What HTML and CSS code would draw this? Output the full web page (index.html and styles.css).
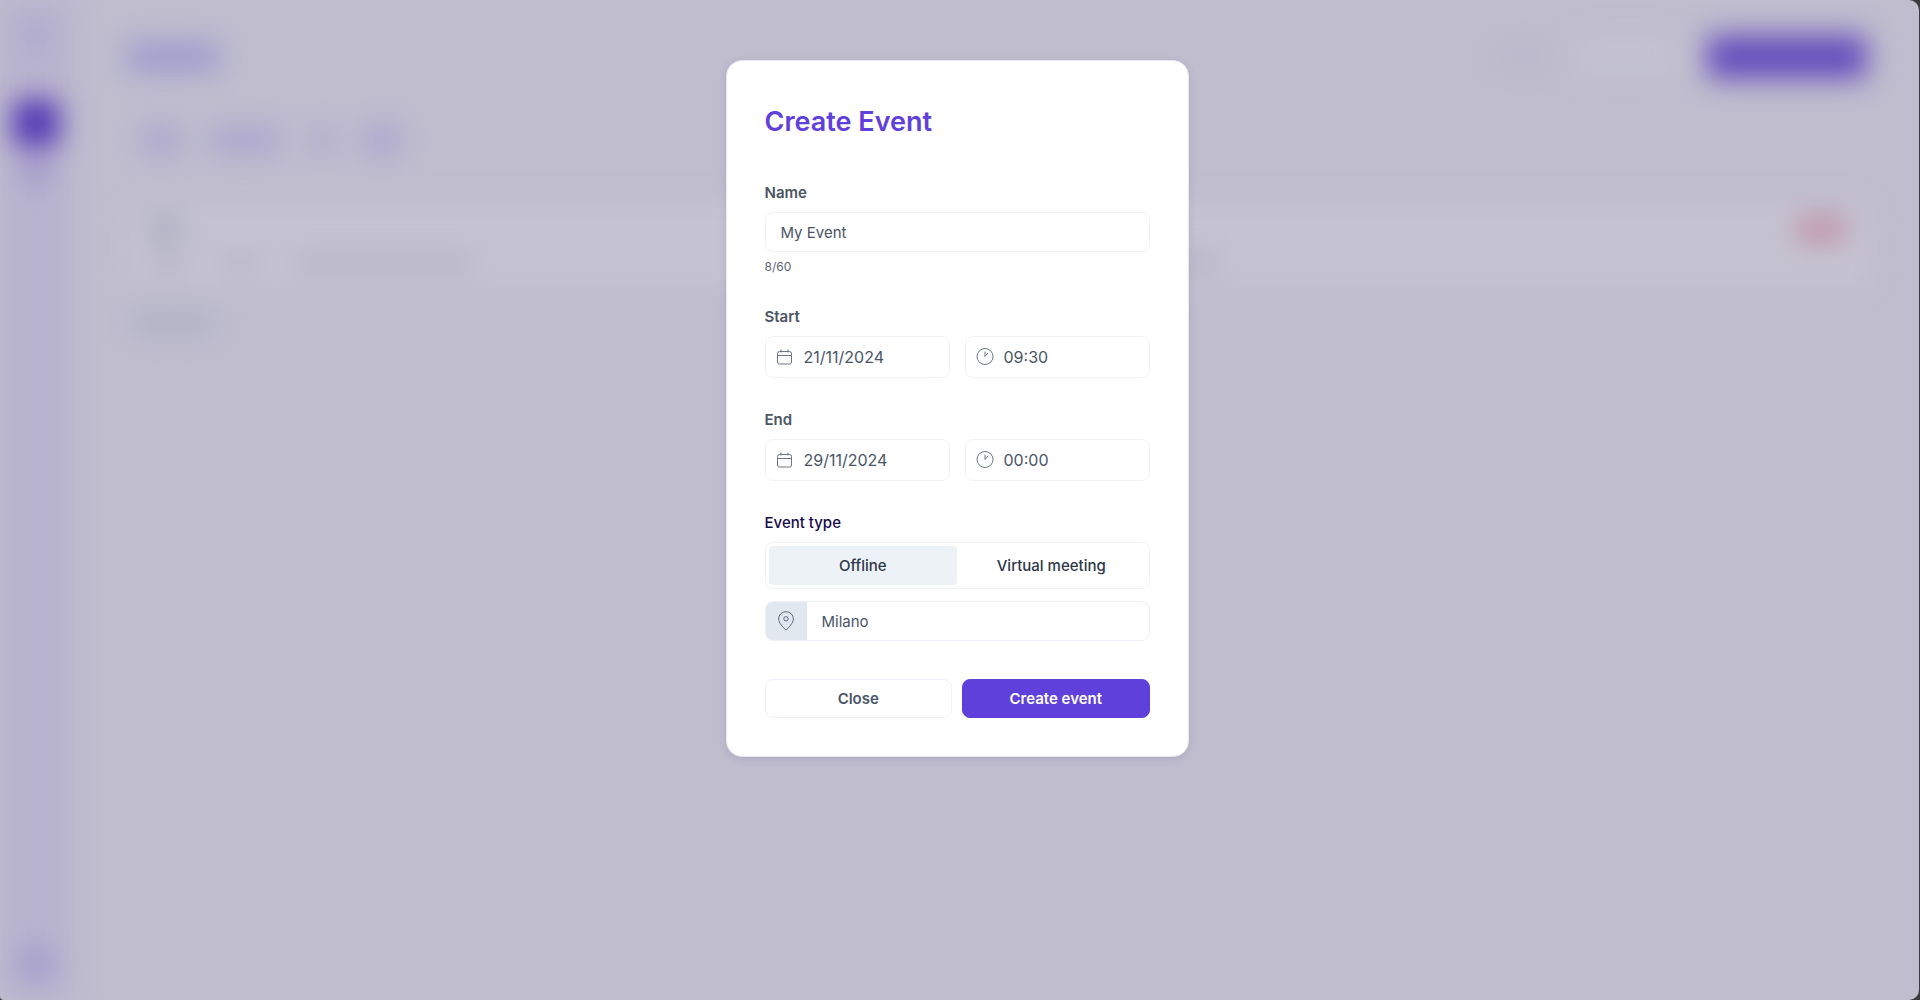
FILE: index.html
```html
<!DOCTYPE html>
<html lang="en">
<head>
    <meta charset="UTF-8">
    <meta name="viewport" content="width=device-width, initial-scale=1.0">
    <title>Create Event</title>
    <link rel="stylesheet" href="styles.css">
</head>
<body>

    <div class="app">
        <!-- blurred page behind the dialog -->
        <div class="page" aria-hidden="true">
            <div class="sidebar">
                <span class="side-logo"></span>
                <span class="side-item active"></span>
                <span class="side-item"></span>
                <span class="side-user"></span>
            </div>
            <div class="main">
                <div class="topbar">
                    <span class="page-title"></span>
                    <span class="sort-label"></span>
                    <span class="sort-box"></span>
                    <span class="new-button"></span>
                </div>
                <div class="tabs">
                    <span class="tab"></span>
                    <span class="tab wide"></span>
                    <span class="tab narrow"></span>
                    <span class="tab"></span>
                </div>
                <div class="card">
                    <div class="card-row">
                        <span class="card-name"></span>
                        <span class="badge"></span>
                    </div>
                    <div class="card-meta">
                        <span class="meta"></span>
                        <span class="meta"></span>
                        <span class="meta long"></span>
                        <span class="meta last"></span>
                    </div>
                </div>
                <span class="results"></span>
            </div>
        </div>

        <div class="overlay">
            <form class="modal" role="dialog" aria-labelledby="modal-title" onsubmit="return false">
                <h1 id="modal-title">Create Event</h1>

                <div class="field">
                    <label for="name">Name</label>
                    <input type="text" id="name" class="input" value="My Event" maxlength="60">
                    <span class="hint" id="count">8/60</span>
                </div>

                <div class="field">
                    <label for="start-date">Start</label>
                    <div class="row">
                        <div class="icon-input">
                            <svg class="icon" viewBox="0 0 18 18">
                                <rect x="1.5" y="3.5" width="14" height="12.5" rx="2"/>
                                <path d="M1.5 7.5h14M5 1.5v3M12 1.5v3"/>
                            </svg>
                            <input type="text" id="start-date" value="21/11/2024">
                        </div>
                        <div class="icon-input">
                            <svg class="icon" viewBox="0 0 18 18">
                                <circle cx="9" cy="8.5" r="8"/>
                                <path d="M9 3.5v5l3-3.5"/>
                            </svg>
                            <input type="text" id="start-time" aria-label="Start time" value="09:30">
                        </div>
                    </div>
                </div>

                <div class="field">
                    <label for="end-date">End</label>
                    <div class="row">
                        <div class="icon-input">
                            <svg class="icon" viewBox="0 0 18 18">
                                <rect x="1.5" y="3.5" width="14" height="12.5" rx="2"/>
                                <path d="M1.5 7.5h14M5 1.5v3M12 1.5v3"/>
                            </svg>
                            <input type="text" id="end-date" value="29/11/2024">
                        </div>
                        <div class="icon-input">
                            <svg class="icon" viewBox="0 0 18 18">
                                <circle cx="9" cy="8.5" r="8"/>
                                <path d="M9 3.5v5l3-3.5"/>
                            </svg>
                            <input type="text" id="end-time" aria-label="End time" value="00:00">
                        </div>
                    </div>
                </div>

                <div class="field">
                    <label for="location" class="type-label">Event type</label>
                    <div class="switch">
                        <button type="button" class="option selected" aria-pressed="true">Offline</button>
                        <button type="button" class="option" aria-pressed="false">Virtual meeting</button>
                    </div>
                    <div class="location">
                        <span class="prefix">
                            <svg class="pin" viewBox="0 0 20 20">
                                <path d="M10 19.2C7.5 16.6 2.6 12 2.6 7.8a7.4 7.1 0 0 1 14.8 0c0 4.2-4.9 8.8-7.4 11.4z"/>
                                <circle cx="10" cy="7.8" r="2.2"/>
                            </svg>
                        </span>
                        <input type="text" id="location" value="Milano">
                    </div>
                </div>

                <div class="actions">
                    <button type="button" class="btn">Close</button>
                    <button type="submit" class="btn primary">Create event</button>
                </div>
            </form>
        </div>
    </div>

    <script>
        const nameInput = document.getElementById('name');
        const options = document.querySelectorAll('.option');

        nameInput.addEventListener('input', function () {
            document.getElementById('count').textContent = nameInput.value.length + '/60';
        });

        options.forEach(function (option) {
            option.addEventListener('click', function () {
                options.forEach(function (o) {
                    o.classList.toggle('selected', o === option);
                    o.setAttribute('aria-pressed', o === option);
                });
            });
        });
    </script>

</body>
</html>
```
FILE: styles.css
```css
* {
    box-sizing: border-box;
}
body {
    margin: 0;
    background-color: #3b3b3f;
    font-family: Inter, "Liberation Sans", sans-serif;
    font-size: 15px;
    color: #4a5568;
}
.app {
    display: grid;
    min-height: 100vh;
    margin-right: 1px;
    border-radius: 0 10px 10px 4px;
    background-color: #bfbdce;
    overflow: hidden;
}
.page,
.overlay {
    grid-area: 1 / 1;
}

/* page behind */
.page {
    display: flex;
    filter: blur(14px);
}
.page span {
    display: block;
    border-radius: 8px;
}
.sidebar {
    display: flex;
    flex-direction: column;
    align-items: center;
    width: 72px;
    padding: 24px 0 20px;
    background-color: #b8b3ce;
}
.side-logo {
    width: 20px;
    height: 24px;
    margin-bottom: 52px;
    background-color: #aaa2cf;
}
.side-item {
    width: 26px;
    height: 30px;
    margin-top: 10px;
    background-color: #a097ca;
}
.side-item.active {
    width: 46px;
    height: 46px;
    margin-top: 0;
    background-color: #5236b3;
}
.side-user {
    width: 34px;
    height: 34px;
    margin-top: auto;
    background-color: #a49ccc;
}
.main {
    flex: 1;
    padding: 34px 48px 0 54px;
}
.topbar {
    display: flex;
    align-items: center;
    height: 46px;
}
.page-title {
    width: 94px;
    height: 30px;
    margin-right: auto;
    background-color: #a19ace;
}
.sort-label {
    width: 54px;
    height: 14px;
    margin-right: 22px;
    background-color: #b7b4c7;
}
.sort-box {
    width: 106px;
    height: 44px;
    margin-right: 28px;
    background-color: #c4c2d0;
}
.new-button {
    width: 160px;
    height: 44px;
    margin-right: 4px;
    background-color: #664fbd;
}
.tabs {
    display: flex;
    align-items: center;
    gap: 31px;
    height: 40px;
    margin-top: 40px;
    padding-left: 17px;
}
.tab {
    width: 36px;
    height: 28px;
    background-color: #aaa3ce;
}
.tab.wide {
    width: 70px;
    height: 24px;
}
.tab.narrow {
    width: 22px;
    height: 22px;
}
.card {
    height: 86px;
    margin-top: 42px;
    padding: 12px 24px;
    border-radius: 12px;
    background-color: #c5c3d1;
}
.card-row {
    display: flex;
    justify-content: space-between;
    height: 30px;
}
.card-name {
    width: 32px;
    height: 28px;
    background-color: #abacc0;
}
.badge {
    width: 52px;
    height: 30px;
    background-color: #c097ac;
}
.card-meta {
    display: flex;
    gap: 36px;
    margin-top: 10px;
}
.meta {
    width: 36px;
    height: 18px;
    background-color: #b5b3c5;
}
.meta.long {
    width: 180px;
}
.meta.last {
    width: 60px;
    margin-left: 650px;
}
.results {
    width: 82px;
    height: 20px;
    margin-top: 24px;
    margin-left: 6px;
    background-color: #aeafc3;
}

/* dialog */
.overlay {
    z-index: 1;
    display: flex;
    justify-content: center;
    align-items: flex-start;
    padding: 60px 5px 60px 0;
}
.modal {
    width: 100%;
    max-width: 463px;
    padding: 38px;
    border: 1px solid #e8e7f0;
    border-radius: 16px;
    background-color: #fff;
    box-shadow: 0 2px 8px rgba(60, 50, 110, 0.12);
}
.modal h1 {
    margin: 0 0 37px;
    font-size: 27px;
    font-weight: 600;
    line-height: 46px;
    color: #6040db;
}
.field {
    margin-bottom: 31px;
}
.field label {
    display: block;
    margin-bottom: 8px;
    font-weight: 600;
    line-height: 22px;
    color: #4b5563;
}
.field .type-label {
    font-weight: 500;
    color: #170a4b;
}
input,
button {
    font-family: inherit;
    font-size: 15px;
    color: #4a5568;
}
.input {
    display: block;
    width: 100%;
    height: 40px;
    padding: 0 15px;
    border: 1px solid #f0f2fb;
    border-radius: 8px;
}
.hint {
    display: block;
    margin-top: 7px;
    font-size: 12px;
    line-height: 16px;
    color: #5a6579;
}
.row {
    display: grid;
    grid-template-columns: 1fr 1fr;
    gap: 15px;
}
.icon-input {
    display: flex;
    align-items: center;
    gap: 10px;
    min-width: 0;
    height: 42px;
    padding: 0 10px;
    border: 1px solid #eff3fa;
    border-radius: 8px;
}
.icon-input input,
.location input {
    flex: 1;
    min-width: 0;
    padding: 0;
    border: none;
    background: none;
}
.icon-input input {
    font-size: 16px;
}
.icon {
    width: 18px;
    height: 18px;
    fill: none;
    stroke: #6b7588;
}
.switch {
    display: grid;
    grid-template-columns: 1fr 1fr;
    margin-bottom: 12px;
    padding: 3px;
    border: 1px solid #f0f4f9;
    border-radius: 8px;
}
.option {
    height: 39px;
    border: none;
    border-radius: 4px;
    background: none;
    font-weight: 500;
    color: #2d3748;
    cursor: pointer;
}
.option.selected {
    background-color: #edf2f7;
}
.location {
    display: flex;
    height: 40px;
    border: 1px solid #eef1f8;
    border-radius: 8px;
    overflow: hidden;
}
.location input {
    padding: 0 15px;
}
.prefix {
    display: flex;
    justify-content: center;
    align-items: center;
    width: 41px;
    background-color: #e2e8f0;
}
.pin {
    width: 20px;
    height: 20px;
    fill: none;
    stroke: #5d6679;
}
.actions {
    display: grid;
    grid-template-columns: 1fr 1fr;
    gap: 10px;
    margin-top: 38px;
}
.btn {
    height: 39px;
    border: 1px solid #f0f0fa;
    border-radius: 8px;
    background-color: #fff;
    font-weight: 600;
    cursor: pointer;
}
.btn.primary {
    border-color: #6040db;
    background-color: #6040db;
    color: #fff;
}
```
